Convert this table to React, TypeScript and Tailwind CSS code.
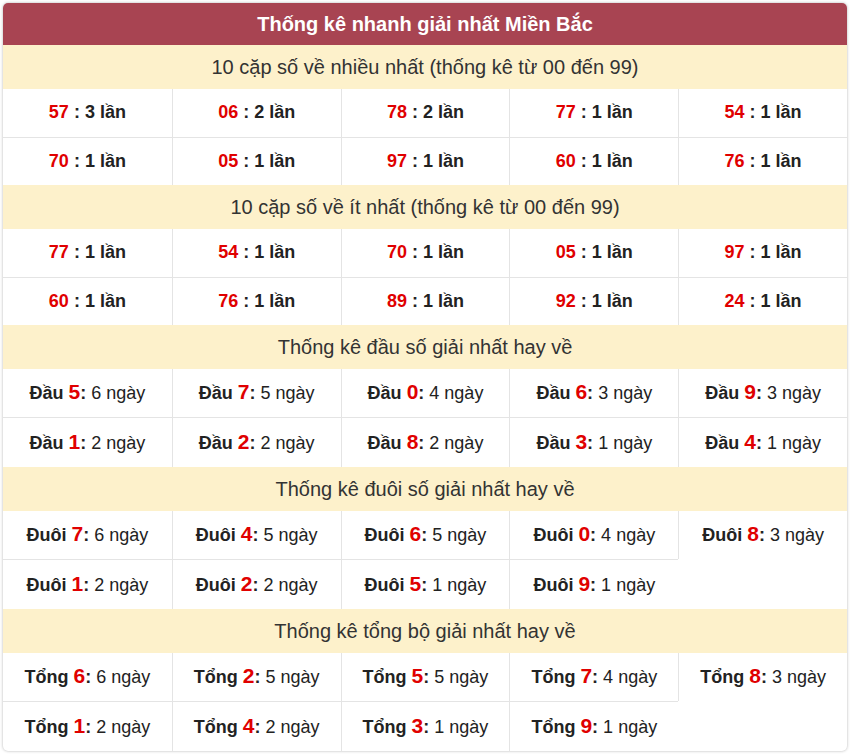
import React from "react";

type Pair = [string, string];

const font = { fontFamily: '"Liberation Sans", Arial, sans-serif' };

const most: Pair[] = [
  ["57", "3"], ["06", "2"], ["78", "2"], ["77", "1"], ["54", "1"],
  ["70", "1"], ["05", "1"], ["97", "1"], ["60", "1"], ["76", "1"],
];
const least: Pair[] = [
  ["77", "1"], ["54", "1"], ["70", "1"], ["05", "1"], ["97", "1"],
  ["60", "1"], ["76", "1"], ["89", "1"], ["92", "1"], ["24", "1"],
];
const dau: Pair[] = [
  ["5", "6"], ["7", "5"], ["0", "4"], ["6", "3"], ["9", "3"],
  ["1", "2"], ["2", "2"], ["8", "2"], ["3", "1"], ["4", "1"],
];
const duoi: Pair[] = [
  ["7", "6"], ["4", "5"], ["6", "5"], ["0", "4"], ["8", "3"],
  ["1", "2"], ["2", "2"], ["5", "1"], ["9", "1"],
];
const tong: Pair[] = [
  ["6", "6"], ["2", "5"], ["5", "5"], ["7", "4"], ["8", "3"],
  ["1", "2"], ["4", "2"], ["3", "1"], ["9", "1"],
];

function Title({ text }: { text: string }) {
  return (
    <div className="h-[44px] flex items-center justify-center bg-[#fdf1cb] text-[#333] text-[20px] leading-none pb-[1px]">
      {text}
    </div>
  );
}

function Cell({ i, children, h }: { i: number; children: React.ReactNode; h: string }) {
  const cls = [
    "flex items-center justify-center",
    h,
    i >= 5 ? "border-t border-[#e4e4e4]" : "",
    i % 5 !== 0 ? "border-l border-[#e4e4e4]" : "",
  ].join(" ");
  return <div className={cls}>{children}</div>;
}

function PairGrid({ items }: { items: Pair[] }) {
  return (
    <div className="grid grid-cols-5">
      {items.map(([n, c], i) => (
        <Cell key={i} i={i} h="h-[48px]">
          <span className="font-bold text-[18px] leading-none text-[#222] pb-[2px]">
            <span className="text-[#e00000]">{n}</span> : {c} lần
          </span>
        </Cell>
      ))}
    </div>
  );
}

function DayGrid({ items, label }: { items: Pair[]; label: string }) {
  return (
    <div className="grid grid-cols-5">
      {items.map(([n, c], i) => (
        <Cell key={i} i={i} h={i < 5 ? "h-[48px]" : "h-[50px]"}>
          <span className="text-[18px] leading-none text-[#222] pb-[3px]">
            <b>
              {label} <span className="text-[#e00000] text-[21px]">{n}</span>:
            </b>{" "}
            {c} ngày
          </span>
        </Cell>
      ))}
    </div>
  );
}

export default function App() {
  return (
    <div className="bg-white w-[850px] h-[754px] p-[3px]" style={font}>
      <div className="rounded-[5px] overflow-hidden shadow-[0_0_3px_rgba(0,0,0,0.3)] bg-white">
        <div className="h-[42px] flex items-center justify-center bg-[#a84452] text-white font-bold text-[20px] leading-none pb-[1px]">
          Thống kê nhanh giải nhất Miền Bắc
        </div>
        <Title text="10 cặp số về nhiều nhất (thống kê từ 00 đến 99)" />
        <PairGrid items={most} />
        <Title text="10 cặp số về ít nhất (thống kê từ 00 đến 99)" />
        <PairGrid items={least} />
        <Title text="Thống kê đầu số giải nhất hay về" />
        <DayGrid items={dau} label="Đầu" />
        <Title text="Thống kê đuôi số giải nhất hay về" />
        <DayGrid items={duoi} label="Đuôi" />
        <Title text="Thống kê tổng bộ giải nhất hay về" />
        <DayGrid items={tong} label="Tổng" />
      </div>
    </div>
  );
}
